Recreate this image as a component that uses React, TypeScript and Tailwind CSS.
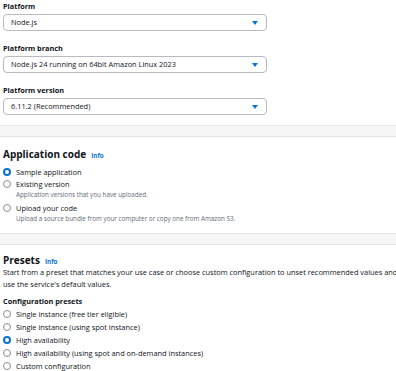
import React from "react";

type Option = { label: string; description?: string; checked?: boolean };

function Caret() {
  return (
    <svg width="6" height="4" viewBox="0 0 6 4" className="shrink-0">
      <path d="M0 0 H6 L3 4 Z" fill="#0972d3" />
    </svg>
  );
}

function Select({ value }: { value: string }) {
  return (
    <div className="mt-[2px] flex h-[17px] w-[264px] items-center justify-between rounded-[4px] border border-[#b9b9c0] bg-white pl-[7px] pr-[8px]">
      <span className="text-[7.4px] leading-[11px] text-[#0f141a]">{value}</span>
      <Caret />
    </div>
  );
}

function Field({ label, value, first }: { label: string; value: string; first?: boolean }) {
  return (
    <div className={first ? "pt-[1px]" : "mt-[12px]"}>
      <div className="text-[7.3px] font-bold leading-[11px] text-[#0f141a]">{label}</div>
      <Select value={value} />
    </div>
  );
}

function Radio({ checked }: { checked?: boolean }) {
  if (checked) {
    return <span className="box-border block h-[8px] w-[8px] shrink-0 rounded-full border-[2.5px] border-[#0972d3] bg-white" />;
  }
  return <span className="box-border block h-[8px] w-[8px] shrink-0 rounded-full border border-[#8c8c94] bg-white" />;
}

function RadioRow({ opt }: { opt: Option }) {
  return (
    <div>
      <div className="flex h-[12px] items-center gap-[5px]">
        <Radio checked={opt.checked} />
        <span className="text-[7.4px] leading-[12px] text-[#0f141a]">{opt.label}</span>
      </div>
      {opt.description && (
        <div className="pl-[13px] text-[6.3px] leading-[9px] text-[#5f6b7a]">{opt.description}</div>
      )}
    </div>
  );
}

function Heading({ title }: { title: string }) {
  return (
    <div className="h-[12px] whitespace-nowrap text-[10px] leading-[12px]">
      <span className="font-bold text-[#0f141a]">{title}</span>
      <span className="ml-[5px] text-[6.3px] font-bold text-[#0972d3]">Info</span>
    </div>
  );
}

const appCode: Option[] = [
  { label: "Sample application", checked: true },
  { label: "Existing version", description: "Application versions that you have uploaded." },
  { label: "Upload your code", description: "Upload a source bundle from your computer or copy one from Amazon S3." },
];

const presets: Option[] = [
  { label: "Single instance (free tier eligible)" },
  { label: "Single instance (using spot instance)" },
  { label: "High availability", checked: true },
  { label: "High availability (using spot and on-demand instances)" },
  { label: "Custom configuration" },
];

export default function App() {
  return (
    <div className="h-[371px] w-[396px] overflow-hidden bg-[#f6f6f6] font-['Open_Sans',sans-serif]">
      <div className="border-b border-[#e4e4e7] bg-white px-[3px] pb-[10px]">
        <Field first label="Platform" value="Node.js" />
        <Field label="Platform branch" value="Node.js 24 running on 64bit Amazon Linux 2023" />
        <Field label="Platform version" value="6.11.2 (Recommended)" />
      </div>

      <div className="mt-[10px] border-y border-[#e4e4e7] bg-white px-[3px] pb-[10px] pt-[11px]">
        <Heading title="Application code" />
        <div className="mt-[6px] flex flex-col">
          {appCode.map((o, i) => (
            <div key={o.label} className={i === 2 ? "mt-[3px]" : ""}>
              <RadioRow opt={o} />
            </div>
          ))}
        </div>
      </div>

      <div className="mt-[10px] border-t border-[#e4e4e7] bg-white px-[3px] pt-[9px]">
        <Heading title="Presets" />
        <p className="whitespace-nowrap text-[7.4px] leading-[12px] text-[#0f141a]">
          Start from a preset that matches your use case or choose custom configuration to unset recommended values and
          <br />
          use the service's default values.
        </p>
        <div className="mt-[6px] text-[7.3px] font-bold leading-[11px] text-[#0f141a]">Configuration presets</div>
        <div className="mt-[1px] flex flex-col gap-[1px]">
          {presets.map((o) => (
            <RadioRow key={o.label} opt={o} />
          ))}
        </div>
      </div>
    </div>
  );
}
